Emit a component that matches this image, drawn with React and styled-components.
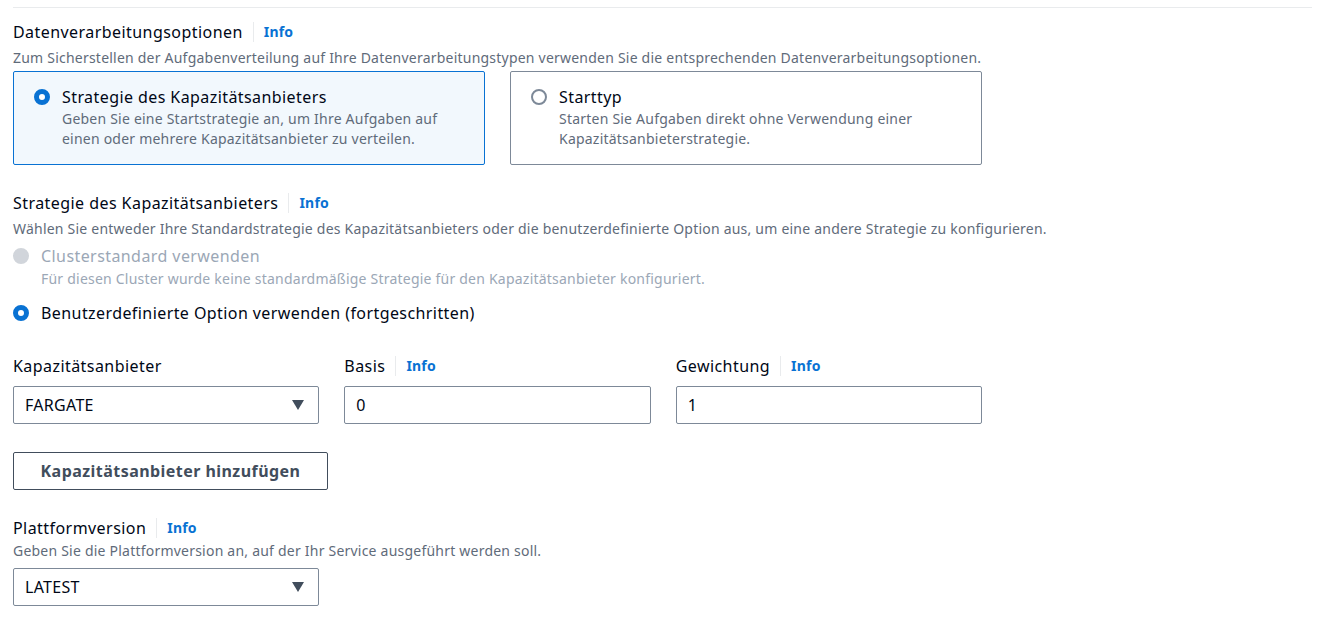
import React from 'react'
import styled, { createGlobalStyle } from 'styled-components'

const GlobalStyle = createGlobalStyle`
  body {
    margin: 0;
    background: #ffffff;
    font-family: "Noto Sans", "Open Sans", sans-serif;
    color: #000716;
  }
`

const Page = styled.div`
  padding: 7px 21px 0 13px;
`

const Divider = styled.div`
  border-top: 1px solid #e9ebed;
  margin-bottom: 12px;
`

const Section = styled.section`
  margin-bottom: ${(p) => p.gap || 0}px;
`

const HeaderRow = styled.div`
  display: flex;
  align-items: center;
  height: 24px;
`

const Title = styled.span`
  font-size: 16px;
  line-height: 22px;
  letter-spacing: 0.44px;
  color: #000716;
`

const InfoLink = styled.a`
  font-size: 14px;
  font-weight: 700;
  color: #0972d3;
  margin-left: 10px;
  padding-left: 10px;
  border-left: 1px solid #e9ebed;
  line-height: 20px;
  letter-spacing: 0.2px;
`

const Description = styled.div`
  font-size: 14px;
  line-height: 20px;
  letter-spacing: 0.22px;
  color: #5f6b7a;
  margin-top: ${(p) => (p.tight ? 1 : 4)}px;
`

const TileGrid = styled.div`
  display: grid;
  grid-template-columns: 1fr 1fr;
  gap: 25px;
  width: 969px;
  margin-top: 3px;
`

const Tile = styled.div`
  display: flex;
  gap: 12px;
  height: 94px;
  box-sizing: border-box;
  padding: 15px 20px;
  border: 1px solid ${(p) => (p.selected ? '#0972d3' : '#7d8998')};
  background: ${(p) => (p.selected ? '#f2f8fd' : '#ffffff')};
  border-radius: 2px;
`

const Radio = styled.span`
  flex: none;
  width: 16px;
  height: 16px;
  box-sizing: border-box;
  border-radius: 50%;
  margin-top: 2px;
  border: ${(p) =>
    p.checked ? '5px solid #0972d3' : p.disabled ? '8px solid #d1d5db' : '2px solid #7d8998'};
  background: #ffffff;
`

const OptionText = styled.div`
  display: flex;
  flex-direction: column;
`

const OptionLabel = styled.span`
  font-size: 16px;
  line-height: 20px;
  letter-spacing: 0.42px;
  color: ${(p) => (p.disabled ? '#9ba7b6' : '#000716')};
`

const OptionHint = styled.span`
  font-size: 14px;
  line-height: 20px;
  letter-spacing: 0.22px;
  margin-top: ${(p) => (p.disabled ? 3 : 2)}px;
  color: ${(p) => (p.disabled ? '#9ba7b6' : '#5f6b7a')};
`

const RadioList = styled.div`
  display: flex;
  flex-direction: column;
  gap: 14px;
  margin-top: 7px;
`

const RadioRow = styled.div`
  display: flex;
  gap: 12px;
`

const FieldGrid = styled.div`
  display: grid;
  grid-template-columns: repeat(3, 1fr);
  gap: 25px;
  width: 969px;
`

const Field = styled.div`
  display: flex;
  flex-direction: column;
  gap: 8px;
`

const Box = styled.div`
  display: flex;
  align-items: center;
  justify-content: space-between;
  height: 38px;
  box-sizing: border-box;
  padding: 0 14px 0 11px;
  border: 1px solid #7d8998;
  border-radius: 2px;
  font-size: 16px;
  letter-spacing: 0.3px;
  color: #000716;
  background: #ffffff;
`

const SelectWrap = styled.div`
  width: 306px;
  margin-top: ${(p) => p.top || 0}px;
`

const Caret = () => (
  <svg width="12" height="10" viewBox="0 0 12 10">
    <path d="M0 0 L12 0 L6 10 Z" fill="#414d5c" />
  </svg>
)

const Button = styled.button`
  margin-top: 28px;
  width: 315px;
  height: 38px;
  box-sizing: border-box;
  background: #ffffff;
  border: 1px solid #414d5c;
  border-radius: 2px;
  font-family: inherit;
  font-size: 16px;
  font-weight: 700;
  letter-spacing: 0.45px;
  color: #414d5c;
  padding: 0;
`

function Header({ title, info }) {
  return (
    <HeaderRow>
      <Title>{title}</Title>
      {info && <InfoLink>Info</InfoLink>}
    </HeaderRow>
  )
}

function Select({ value, top }) {
  return (
    <SelectWrap top={top}>
      <Box>
        <span>{value}</span>
        <Caret />
      </Box>
    </SelectWrap>
  )
}

export default function App() {
  return (
    <>
      <GlobalStyle />
      <Page>
        <Divider />
        <Section gap={26}>
          <Header title="Datenverarbeitungsoptionen" info />
          <Description>
            Zum Sicherstellen der Aufgabenverteilung auf Ihre Datenverarbeitungstypen verwenden Sie die entsprechenden Datenverarbeitungsoptionen.
          </Description>
          <TileGrid>
            <Tile selected>
              <Radio checked />
              <OptionText>
                <OptionLabel>Strategie des Kapazitätsanbieters</OptionLabel>
                <OptionHint>
                  Geben Sie eine Startstrategie an, um Ihre Aufgaben auf einen oder mehrere Kapazitätsanbieter zu verteilen.
                </OptionHint>
              </OptionText>
            </Tile>
            <Tile>
              <Radio />
              <OptionText>
                <OptionLabel>Starttyp</OptionLabel>
                <OptionHint>
                  Starten Sie Aufgaben direkt ohne Verwendung einer Kapazitätsanbieterstrategie.
                </OptionHint>
              </OptionText>
            </Tile>
          </TileGrid>
        </Section>

        <Section gap={31}>
          <Header title="Strategie des Kapazitätsanbieters" info />
          <Description>
            Wählen Sie entweder Ihre Standardstrategie des Kapazitätsanbieters oder die benutzerdefinierte Option aus, um eine andere Strategie zu konfigurieren.
          </Description>
          <RadioList>
            <RadioRow>
              <Radio disabled />
              <OptionText>
                <OptionLabel disabled>Clusterstandard verwenden</OptionLabel>
                <OptionHint disabled>
                  Für diesen Cluster wurde keine standardmäßige Strategie für den Kapazitätsanbieter konfiguriert.
                </OptionHint>
              </OptionText>
            </RadioRow>
            <RadioRow>
              <Radio checked />
              <OptionLabel>Benutzerdefinierte Option verwenden (fortgeschritten)</OptionLabel>
            </RadioRow>
          </RadioList>
        </Section>

        <Section gap={26}>
          <FieldGrid>
            <Field>
              <Header title="Kapazitätsanbieter" />
              <Box>
                <span>FARGATE</span>
                <Caret />
              </Box>
            </Field>
            <Field>
              <Header title="Basis" info />
              <Box>0</Box>
            </Field>
            <Field>
              <Header title="Gewichtung" info />
              <Box>1</Box>
            </Field>
          </FieldGrid>
          <Button>Kapazitätsanbieter hinzufügen</Button>
        </Section>

        <Section>
          <Header title="Plattformversion" info />
          <Description tight>
            Geben Sie die Plattformversion an, auf der Ihr Service ausgeführt werden soll.
          </Description>
          <Select value="LATEST" top={7} />
        </Section>
      </Page>
    </>
  )
}
